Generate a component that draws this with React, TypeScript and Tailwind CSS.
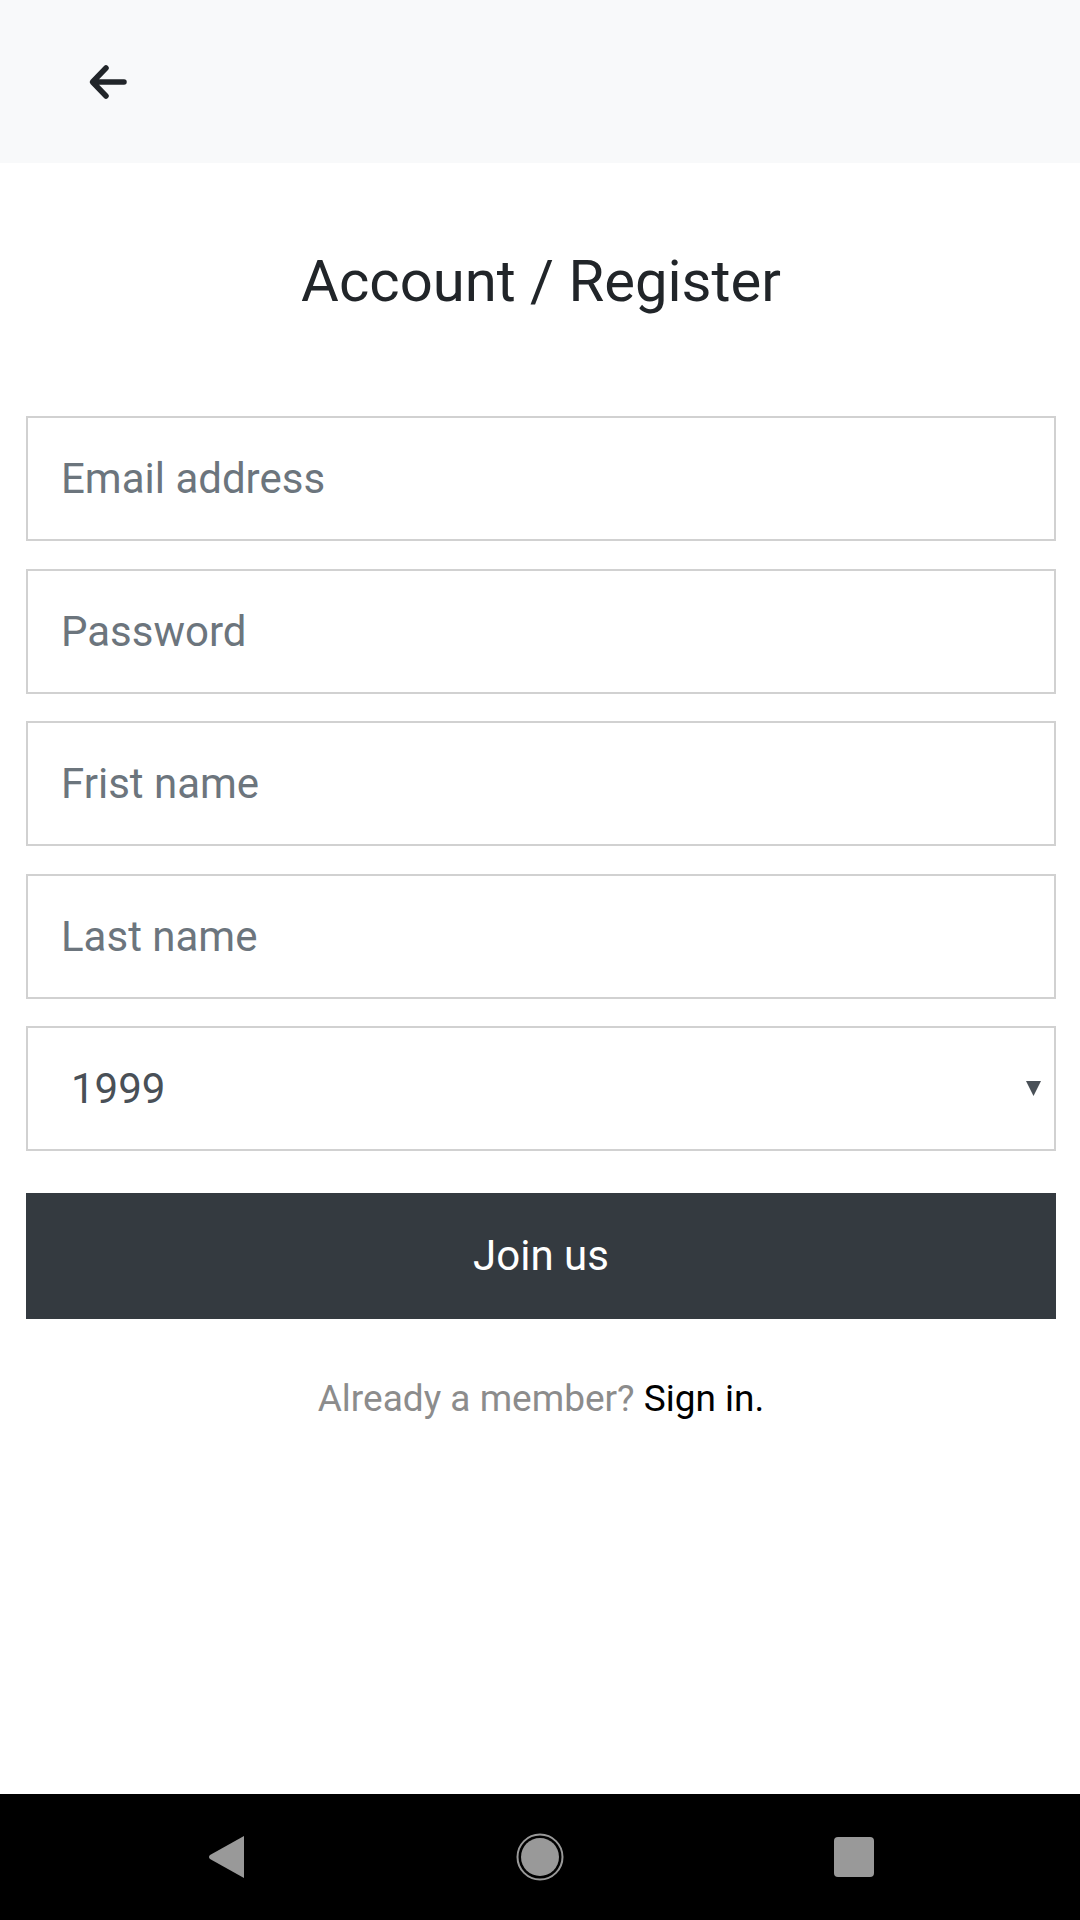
import { useState } from "react";

const inputClass =
  "w-full h-[125px] border-2 border-[#d1d1d1] bg-white px-[33px] text-[42px] text-[#495057] placeholder:text-[#6c757d] outline-none font-['Roboto',sans-serif]";

export default function App() {
  const [year, setYear] = useState("1999");
  const years = Array.from({ length: 60 }, (_, i) => String(2010 - i));

  return (
    <div className="w-[1080px] h-[1920px] flex flex-col bg-white font-['Roboto',sans-serif]">
      <header className="h-[163px] bg-[#f8f9fa] flex items-center pl-[88px]">
        <svg width="40" height="38" viewBox="0 0 40 38" fill="none">
          <path
            d="M36 19H5M18 5L4.5 19L18 33"
            stroke="#212529"
            strokeWidth="5.5"
            strokeLinecap="round"
            strokeLinejoin="round"
          />
        </svg>
      </header>

      <main className="flex-1 pl-[26px] pr-[24px]">
        <h1 className="mt-[84px] text-center text-[58px] leading-[68px] text-[#212529]">
          Account / Register
        </h1>

        <form className="mt-[101px] flex flex-col gap-[27.5px]">
          <input type="email" placeholder="Email address" className={inputClass} />
          <input type="password" placeholder="Password" className={inputClass} />
          <input type="text" placeholder="Frist name" className={inputClass} />
          <input type="text" placeholder="Last name" className={inputClass} />
          <div className="relative">
            <select
              value={year}
              onChange={(e) => setYear(e.target.value)}
              className="w-full h-[125px] appearance-none border-2 border-[#d1d1d1] bg-white pl-[43px] text-[42px] text-[#495057] outline-none font-['Roboto',sans-serif]"
            >
              {years.map((y) => (
                <option key={y} value={y}>
                  {y}
                </option>
              ))}
            </select>
            <svg
              className="absolute right-[15px] top-[55px] pointer-events-none"
              width="15"
              height="15"
              viewBox="0 0 15 15"
            >
              <path d="M0 0H15L7.5 15Z" fill="#495057" />
            </svg>
          </div>

          <button
            type="button"
            className="mt-[14px] h-[126px] w-full bg-[#343a40] text-white text-[42px]"
          >
            Join us
          </button>
        </form>

        <p className="mt-[53px] text-center text-[37px] leading-[54px]">
          <span className="text-[#8c8c8c]">Already a member? </span>
          <span className="text-black">Sign in.</span>
        </p>
      </main>

      <nav className="h-[126px] bg-black flex items-center justify-center gap-[270px]">
        <svg width="40" height="44" viewBox="0 0 40 44">
          <path d="M38 1V43L4 24Q2 22 4 20Z" fill="#999999" />
        </svg>
        <svg width="48" height="48" viewBox="0 0 48 48">
          <circle cx="24" cy="24" r="22.5" fill="none" stroke="#999999" strokeWidth="2" />
          <circle cx="24" cy="24" r="19" fill="#999999" />
        </svg>
        <div className="w-[40px] h-[40px] rounded-[4px] bg-[#999999]" />
      </nav>
    </div>
  );
}
